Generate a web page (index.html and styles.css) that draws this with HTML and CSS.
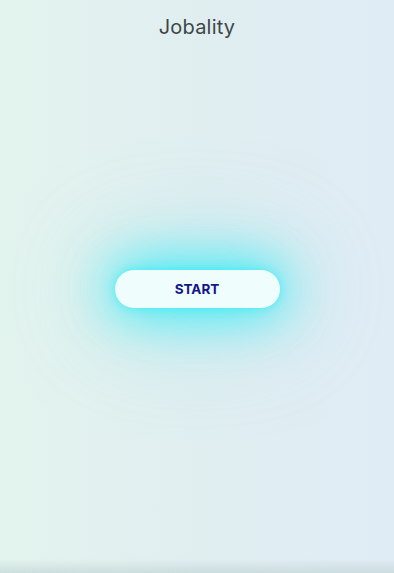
FILE: index.html
```html
<!DOCTYPE html>
<html lang="en">
<head>
    <meta charset="UTF-8">
    <meta name="viewport" content="width=device-width, initial-scale=1.0">
    <title>Jobality</title>
    <link rel="stylesheet" href="styles.css">
</head>
<body>
<div class="page">
    <!-- Header -->
    <header class="header">
        <h1 class="brand">Jobality</h1>
    </header>

    <!-- Start -->
    <main class="main">
        <button class="start-button">START</button>
    </main>
    <div class="bottom-shade"></div>
</div>
</body>
</html>
```

FILE: styles.css
```css
html, body {
    margin: 0;
    padding: 0;
    height: 100%;
}
body {
    font-family: "Open Sans", Arial, sans-serif;
    background: linear-gradient(to right, #e3f4ee, #e0eef0 50%, #e0ecf5);
}
.page {
    min-height: 100vh;
    display: flex;
    flex-direction: column;
    position: relative;
}
.header {
    display: flex;
    justify-content: center;
    padding-top: 15px;
}
.brand {
    margin: 0;
    font-family: "Inter", "Open Sans", sans-serif;
    font-size: 20px;
    font-weight: 400;
    letter-spacing: 0.2px;
    color: #3f4649;
    line-height: 24px;
}
.main {
    flex: 1;
    display: flex;
    justify-content: center;
    align-items: center;
    padding-bottom: 34px;
}
.start-button {
    width: 165px;
    height: 38px;
    border: none;
    border-radius: 19px;
    background: #effdfd;
    color: #15168a;
    font-family: "Inter", Arial, sans-serif;
    font-size: 13.5px;
    font-weight: 700;
    letter-spacing: 0;
    cursor: pointer;
    box-shadow: 0 0 10px rgba(0, 240, 250, 0.5), 0 0 55px 6px rgba(0, 235, 248, 0.8), 0 0 110px 20px rgba(110, 225, 240, 0.3);
}
.bottom-shade {
    position: absolute;
    left: 0;
    right: 0;
    bottom: 0;
    height: 14px;
    background: linear-gradient(to bottom, rgba(200, 215, 215, 0), rgba(190, 210, 210, 0.6));
}
```
